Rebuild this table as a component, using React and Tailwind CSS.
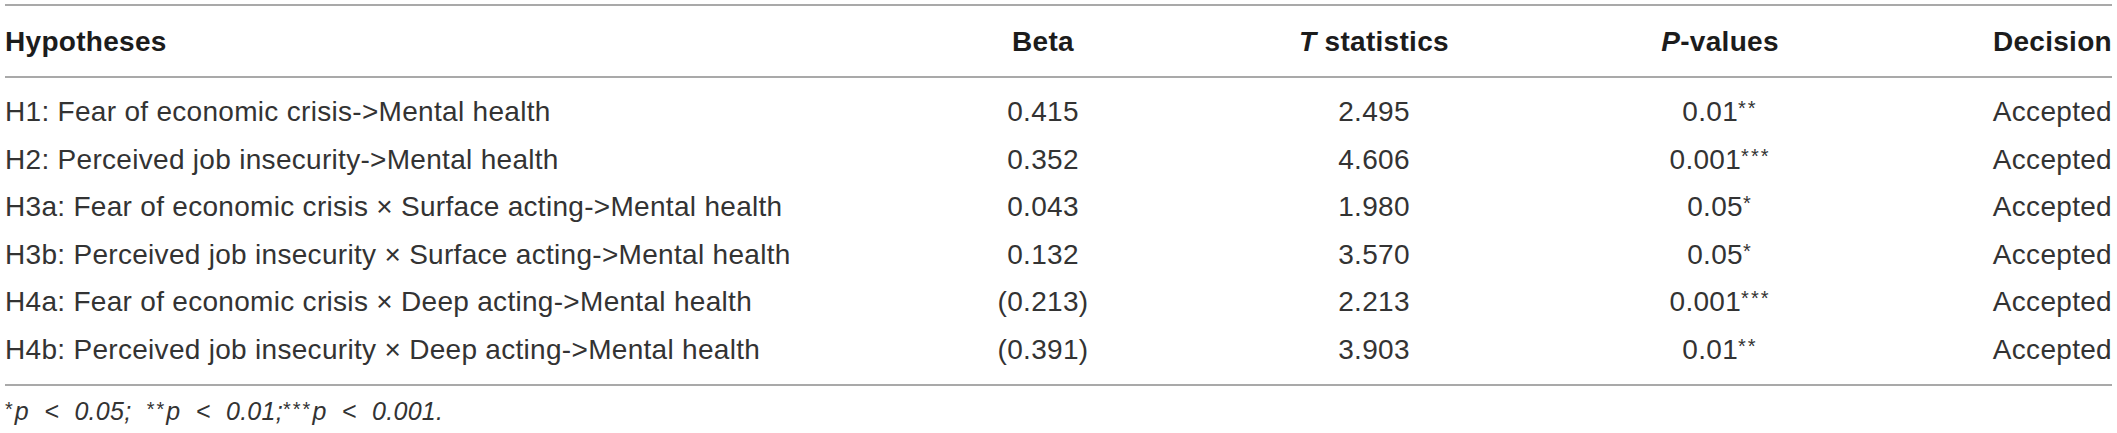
const rows = [
  { h: 'H1: Fear of economic crisis->Mental health', beta: '0.415', t: '2.495', p: '0.01', stars: '**' },
  { h: 'H2: Perceived job insecurity->Mental health', beta: '0.352', t: '4.606', p: '0.001', stars: '***' },
  { h: 'H3a: Fear of economic crisis × Surface acting->Mental health', beta: '0.043', t: '1.980', p: '0.05', stars: '*' },
  { h: 'H3b: Perceived job insecurity × Surface acting->Mental health', beta: '0.132', t: '3.570', p: '0.05', stars: '*' },
  { h: 'H4a: Fear of economic crisis × Deep acting->Mental health', beta: '(0.213)', t: '2.213', p: '0.001', stars: '***' },
  { h: 'H4b: Perceived job insecurity × Deep acting->Mental health', beta: '(0.391)', t: '3.903', p: '0.01', stars: '**' },
];

const cols = 'grid grid-cols-[895px_286px_376px_316px_234px]';

const Stars = ({ children, lift = '-top-[6px]' }) => (
  <span className={`relative ${lift} text-[20px] tracking-[2px] not-italic`}>{children}</span>
);

export default function App() {
  return (
    <div className="bg-white w-[2117px] h-[433px] font-['Liberation_Sans',Arial,sans-serif] text-[28px] tracking-[0.3px] text-[#333]">
      <div className="ml-[5px] w-[2107px] pt-[4px]">
        <div className="h-[2px] bg-[#a9a9a9]" />

        {/* Header */}
        <div className={`${cols} h-[70px] items-center pt-[2px] font-bold text-[#1c1c1c]`}>
          <div>Hypotheses</div>
          <div className="text-center">Beta</div>
          <div className="text-center"><i>T</i> statistics</div>
          <div className="text-center"><i>P</i>-values</div>
          <div className="text-right">Decision</div>
        </div>
        <div className="h-[2px] bg-[#a9a9a9]" />

        {/* Body */}
        <div className="pt-[10px] pb-[10px]">
          {rows.map((r) => (
            <div key={r.h} className={`${cols} h-[47.6px] leading-[47.6px]`}>
              <div>{r.h}</div>
              <div className="text-center">{r.beta}</div>
              <div className="text-center">{r.t}</div>
              <div className="text-center">
                {r.p}
                <Stars>{r.stars}</Stars>
              </div>
              <div className="text-right">Accepted</div>
            </div>
          ))}
        </div>
        <div className="h-[2px] bg-[#a9a9a9]" />

        {/* Footnote */}
        <div className="mt-[10px] text-[25px] leading-[30px] italic [word-spacing:8px]">
          <Stars lift="-top-[4px]">*</Stars>p &lt; 0.05;{' '}
          <Stars lift="-top-[4px]">**</Stars>p &lt; 0.01;
          <Stars lift="-top-[4px]">***</Stars>p &lt; 0.001.
        </div>
      </div>
    </div>
  );
}
